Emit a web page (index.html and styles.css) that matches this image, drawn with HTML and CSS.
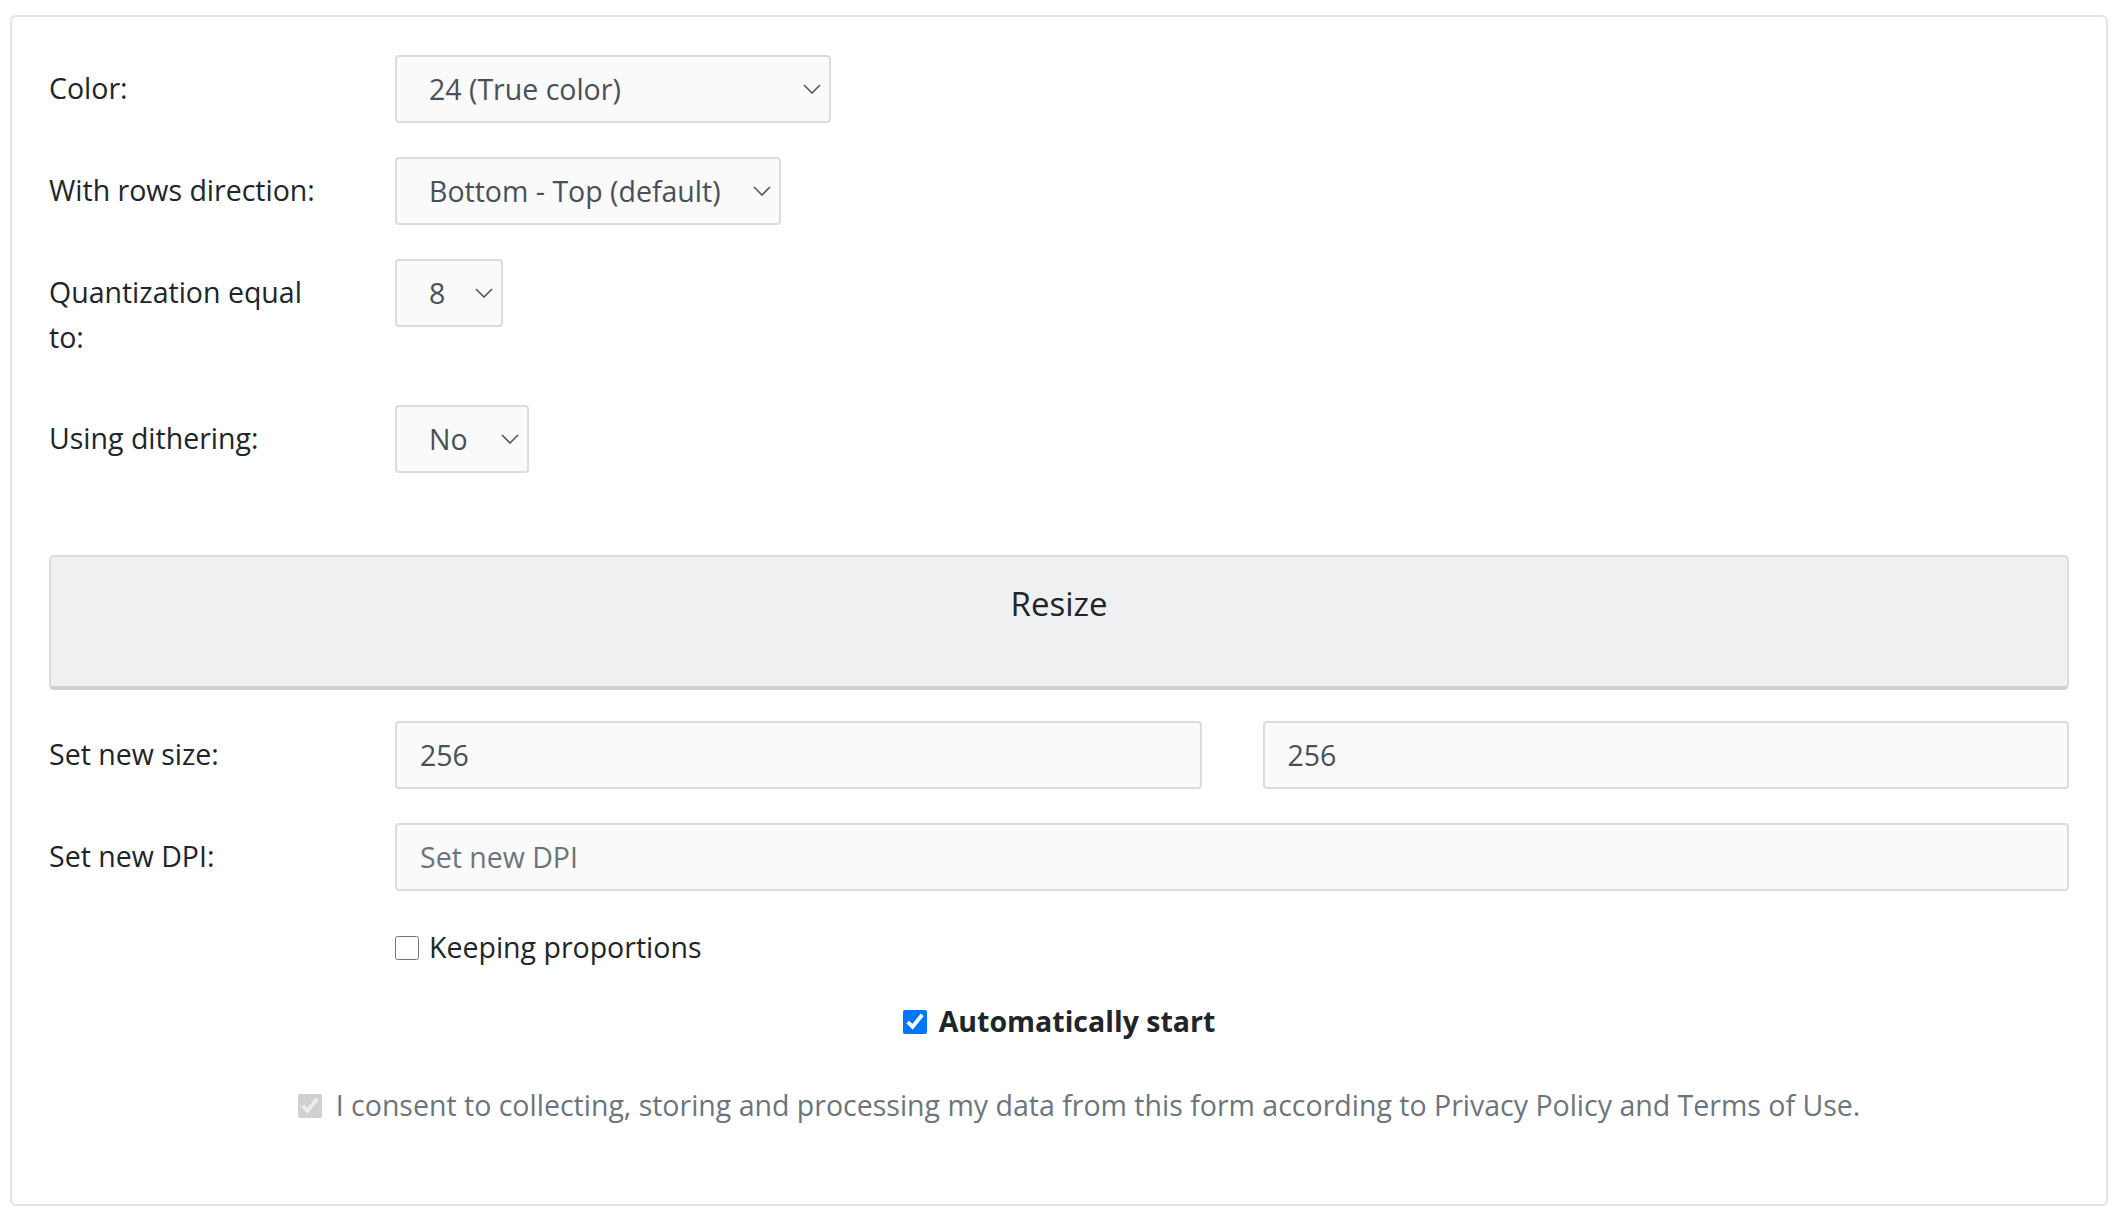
FILE: index.html
```html
<!DOCTYPE html>
<html lang="en">
<head>
<meta charset="utf-8">
<title>Resize</title>
<link rel="stylesheet" href="styles.css">
</head>
<body>
<div class="card">
  <div class="row">
    <label class="lbl">Color:</label>
    <span class="sel w-color">
      <select><option>24 (True color)</option></select>
      <svg class="chev" width="18" height="10" viewBox="0 0 18 10"><path d="M1 1 L9 9 L17 1" fill="none" stroke="#555" stroke-width="1.6"/></svg>
    </span>
  </div>
  <div class="row">
    <label class="lbl">With rows direction:</label>
    <span class="sel w-dir">
      <select><option>Bottom - Top (default)</option></select>
      <svg class="chev" width="18" height="10" viewBox="0 0 18 10"><path d="M1 1 L9 9 L17 1" fill="none" stroke="#555" stroke-width="1.6"/></svg>
    </span>
  </div>
  <div class="row">
    <label class="lbl">Quantization equal<br>to:</label>
    <span class="sel w-q">
      <select><option>8</option></select>
      <svg class="chev" width="18" height="10" viewBox="0 0 18 10"><path d="M1 1 L9 9 L17 1" fill="none" stroke="#555" stroke-width="1.6"/></svg>
    </span>
  </div>
  <div class="row">
    <label class="lbl">Using dithering:</label>
    <span class="sel w-d">
      <select><option>No</option></select>
      <svg class="chev" width="18" height="10" viewBox="0 0 18 10"><path d="M1 1 L9 9 L17 1" fill="none" stroke="#555" stroke-width="1.6"/></svg>
    </span>
  </div>

  <button class="btn" type="button">Resize</button>

  <div class="row">
    <label class="lbl">Set new size:</label>
    <div class="pair">
      <input class="inp" type="text" value="256">
      <input class="inp" type="text" value="256">
    </div>
  </div>
  <div class="row">
    <label class="lbl">Set new DPI:</label>
    <input class="inp" type="text" placeholder="Set new DPI">
  </div>
  <div class="row row-check">
    <span></span>
    <label class="check"><input type="checkbox"> Keeping proportions</label>
  </div>
  <div class="center auto">
    <label class="check bold"><input type="checkbox" checked> Automatically start</label>
  </div>
  <div class="center consent">
    <label class="check muted"><input type="checkbox" checked disabled> I consent to collecting, storing and processing my data from this form according to Privacy Policy and Terms of Use.</label>
  </div>
</div>
</body>
</html>
```
FILE: styles.css
```css
* { box-sizing: border-box; }
html, body { margin: 0; background: #fff; }
body {
  padding: 15px 10px 13px;
  font-family: "Open Sans", "Noto Sans", sans-serif;
  font-size: 28.5px;
  line-height: 45px;
  color: #212529;
}
.card {
  border: 2px solid #e3e3e3;
  border-radius: 6px;
  padding: 38px 37px 76px;
}
.row {
  display: grid;
  grid-template-columns: 289px 1fr;
  column-gap: 57px;
  align-items: start;
  margin-bottom: 34px;
}
.lbl { padding: 11px 0; }
.row-check .lbl { padding: 0; }
.sel { position: relative; display: block; height: 68px; }
.sel select {
  appearance: none;
  -webkit-appearance: none;
  width: 100%;
  height: 68px;
  margin: 0;
  padding: 0 40px 0 32px;
  border: 2px solid #dcdcdc;
  border-radius: 4px;
  background: #fafafa;
  font: inherit;
  color: #495057;
}
.chev { position: absolute; right: 10px; top: 29px; pointer-events: none; }
.w-color { width: 436px; }
.w-dir { width: 386px; }
.w-q { width: 108px; }
.w-d { width: 134px; }
.btn {
  display: block;
  width: 100%;
  height: 135px;
  margin: 82px 0 31px;
  padding: 0 0 35px;
  border: 2px solid #dcdcdd;
  border-bottom: 4px solid #cfd0d2;
  border-radius: 5px;
  background: #eff0f2;
  font-family: inherit;
  font-size: 33px;
  line-height: 50px;
  color: #212529;
  text-align: center;
}
.pair { display: grid; grid-template-columns: 1fr 1fr; column-gap: 61px; }
.inp {
  display: block;
  width: 100%;
  height: 68px;
  margin: 0;
  padding: 0 23px;
  border: 2px solid #dcdcdc;
  border-radius: 4px;
  background: #fafafa;
  font: inherit;
  color: #495057;
}
.inp::placeholder { color: #6c757d; }
.row-check { margin-bottom: 29px; }
.check { display: inline-flex; align-items: center; gap: 10px; }
.check input { width: 24px; height: 24px; margin: 0; flex: none; }
.center { display: flex; justify-content: center; }
.auto { margin-bottom: 39px; }
.bold { font-weight: 700; gap: 12px; }
.consent { padding-left: 40px; }
.muted { color: #6c757d; gap: 14px; }
```
